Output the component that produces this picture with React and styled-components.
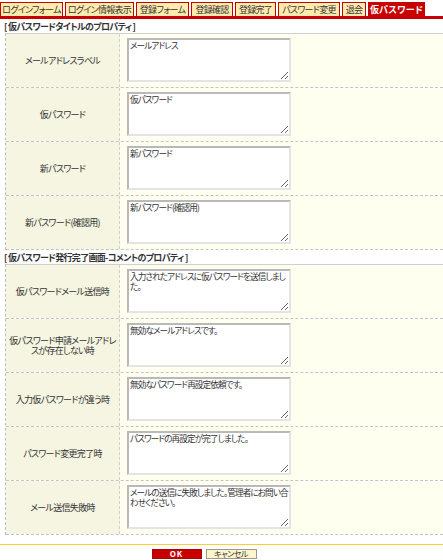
import React from "react";
import styled, { createGlobalStyle } from "styled-components";

const GlobalStyle = createGlobalStyle`
  html, body { margin: 0; padding: 0; background: #fff; }
  body {
    width: 443px;
    height: 560px;
    overflow: hidden;
    font-family: "Noto Sans CJK JP", "Noto Sans", sans-serif;
    font-size: 9px;
    letter-spacing: -0.7px;
    color: #333;
    font-feature-settings: "palt";
  }
`;

const TabBar = styled.div`
  display: flex;
  gap: 2px;
  padding-top: 2px;
  border-bottom: 3px solid #c80000;
`;

const Tab = styled.div`
  width: ${(p) => p.$w}px;
  flex: none;
  height: 14px;
  box-sizing: border-box;
  border: 1px solid #c80000;
  border-bottom: none;
  background: ${(p) => (p.$active ? "#c80000" : "#ffebad")};
  color: ${(p) => (p.$active ? "#fff" : "#333")};
  font-weight: ${(p) => (p.$active ? "bold" : "normal")};
  font-size: 9px;
  letter-spacing: ${(p) => (p.$active ? "0.3px" : "-0.7px")};
  line-height: 13px;
  text-align: center;
  white-space: nowrap;
  overflow: hidden;
`;

const SectionTitle = styled.div`
  margin: 2px 0 0 4px;
  height: 12px;
  line-height: 12px;
  font-weight: bold;
  font-size: 9px;
  color: #333;
`;

const Table = styled.div`
  margin-left: 5px;
  border-top: 1px solid #cfcfcf;
  border-left: 1px dashed #bdbdbd;
`;

const Row = styled.div`
  display: grid;
  grid-template-columns: 114px 1fr;
  border-bottom: 1px dashed #c4c4c4;
`;

const Label = styled.div`
  background: #f5f5e1;
  border-right: 1px dashed #cfcfcf;
  display: flex;
  align-items: center;
  justify-content: center;
  text-align: center;
  padding: 0 3px;
  line-height: 10px;
  font-size: 9px;
  color: #333;
`;

const Field = styled.div`
  background: #fffff0;
  padding: 4px 7px 5px 7px;
`;

const TextArea = styled.textarea`
  display: block;
  width: 164px;
  height: 44px;
  box-sizing: border-box;
  margin: 0;
  border: 2px solid;
  border-color: #b9b9b9 #e4e4e4 #e4e4e4 #b9b9b9;
  background: #fff;
  padding: 0 0 0 1px;
  font-family: "Noto Sans CJK JP", sans-serif;
  font-feature-settings: "palt";
  font-size: 8.6px;
  letter-spacing: -0.9px;
  line-height: 10px;
  color: #333;
  outline: none;
`;

const Footer = styled.div`
  margin-top: 9px;
  border-top: 1px solid #ffcc33;
  padding: 4px 35px 0 0;
  display: flex;
  justify-content: center;
  gap: 4px;
`;

const Button = styled.button`
  width: ${(p) => (p.$primary ? "50px" : "51px")};
  height: 10px;
  padding: 0;
  box-sizing: border-box;
  border: 1px solid ${(p) => (p.$primary ? "#b00000" : "#9a9a8a")};
  background: ${(p) => (p.$primary ? "#c80000" : "#fff5cc")};
  color: ${(p) => (p.$primary ? "#fff" : "#333")};
  font-weight: ${(p) => (p.$primary ? "bold" : "normal")};
  font-family: "Noto Sans CJK JP", sans-serif;
  font-feature-settings: "palt";
  font-size: 8px;
  letter-spacing: ${(p) => (p.$primary ? "1px" : "-0.5px")};
  line-height: 8px;
  overflow: hidden;
  white-space: nowrap;
`;

const tabs = [
  ["ログインフォーム", 63],
  ["ログイン情報表示", 69],
  ["登録フォーム", 53],
  ["登録確認", 42],
  ["登録完了", 41],
  ["パスワード変更", 62],
  ["退会", 24],
  ["仮パスワード", 57],
];

const section1 = [
  ["メールアドレスラベル", "メールアドレス"],
  ["仮パスワード", "仮パスワード"],
  ["新パスワード", "新パスワード"],
  ["新パスワード(確認用)", "新パスワード(確認用)"],
];

const section2 = [
  ["仮パスワードメール送信時", "入力されたアドレスに仮パスワードを送信しました。"],
  ["仮パスワード申請メールアドレスが存在しない時", "無効なメールアドレスです。"],
  ["入力仮パスワードが違う時", "無効なパスワード再設定依頼です。"],
  ["パスワード変更完了時", "パスワードの再設定が完了しました。"],
  ["メール送信失敗時", "メールの送信に失敗しました。管理者にお問い合わせください。"],
];

function Section({ title, rows }) {
  return (
    <>
      <SectionTitle>[ {title} ]</SectionTitle>
      <Table>
        {rows.map(([label, value]) => (
          <Row key={label}>
            <Label>{label}</Label>
            <Field>
              <TextArea defaultValue={value} />
            </Field>
          </Row>
        ))}
      </Table>
    </>
  );
}

export default function App() {
  return (
    <>
      <GlobalStyle />
      <TabBar>
        {tabs.map(([t, w], i) => (
          <Tab key={t} $w={w} $active={i === tabs.length - 1}>
            {t}
          </Tab>
        ))}
      </TabBar>
      <Section title="仮パスワードタイトルのプロパティ" rows={section1} />
      <Section title="仮パスワード発行完了画面-コメントのプロパティ" rows={section2} />
      <Footer>
        <Button $primary>OK</Button>
        <Button>キャンセル</Button>
      </Footer>
    </>
  );
}
